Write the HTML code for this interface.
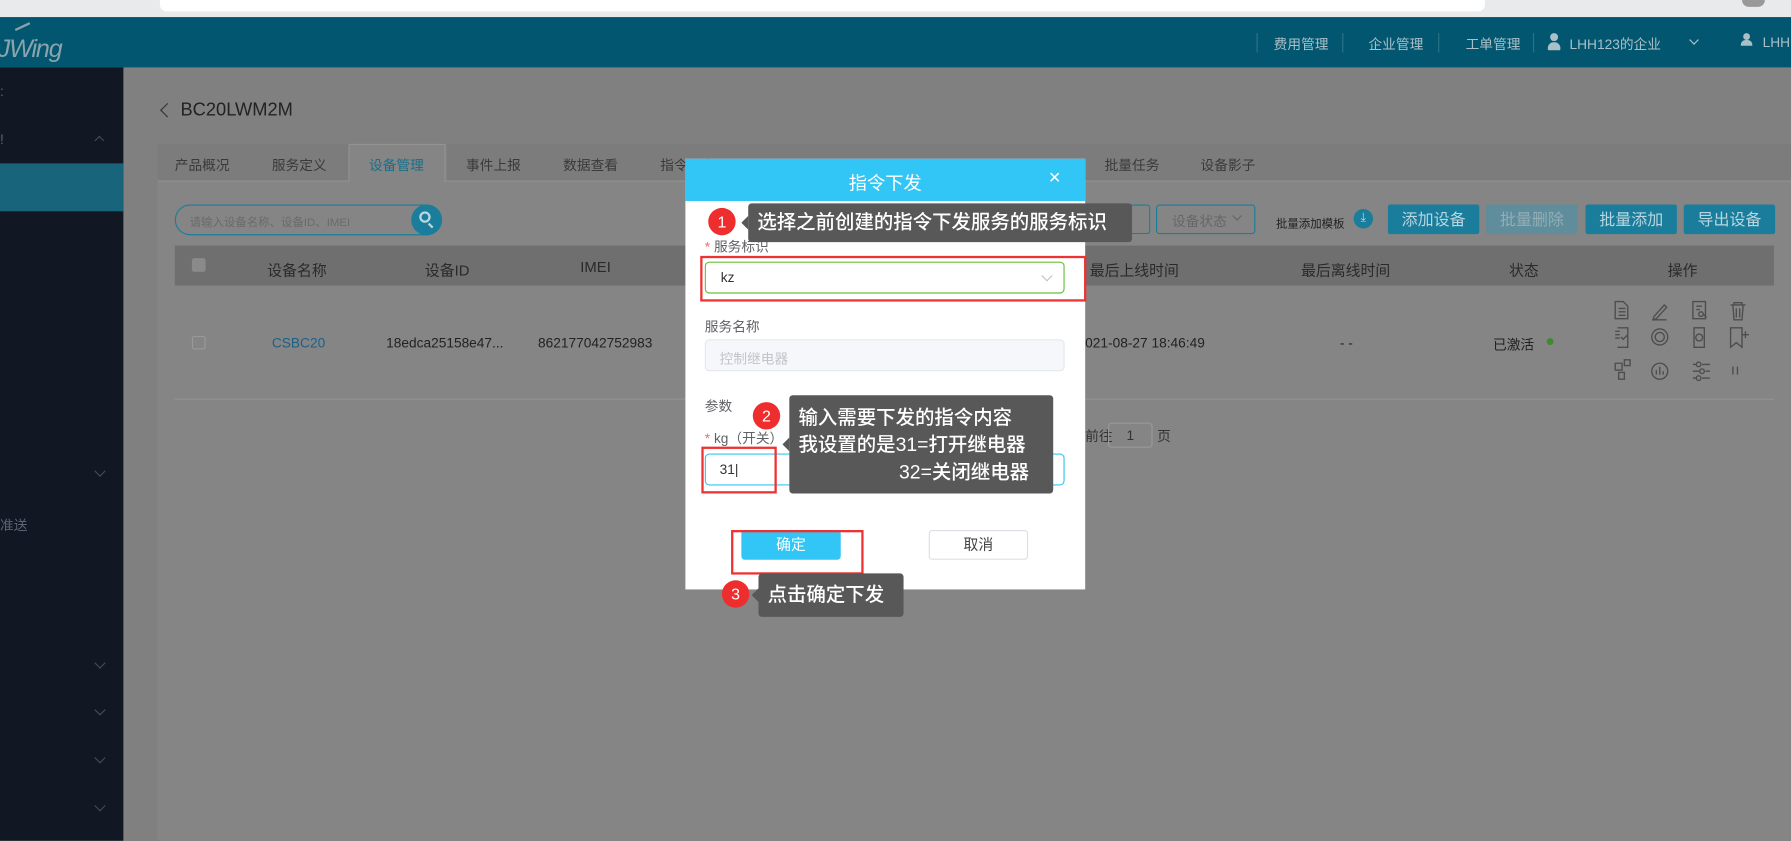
<!DOCTYPE html>
<html><head><meta charset="utf-8"><style>
*{margin:0;padding:0;box-sizing:border-box}
body{width:1791px;height:840px;overflow:hidden;background:#808080;font-family:"Liberation Sans","Noto Sans CJK SC",sans-serif}
#w{position:absolute;left:0;top:0;width:1568px;height:736px;transform:scale(1.1423);transform-origin:0 0;background:#808080}
.a{position:absolute}
.t{position:absolute;white-space:nowrap}
.tab{position:absolute;top:136px;font-size:12px;color:#3a3a3a}
.th{position:absolute;top:226px;font-size:13px;color:#2a2a2a}
.btn{position:absolute;top:179px;height:26px;width:80px;background:#1b7d9c;color:#b8d6e0;font-size:14px;text-align:center;line-height:26px;border-radius:2px}
.chev{position:absolute;width:7px;height:7px;border-right:1px solid #444b58;border-bottom:1px solid #444b58;transform:rotate(45deg)}
.side{position:absolute;left:0;font-size:12px;color:#5b6473}
.lbl{position:absolute;left:617px;font-size:12px;color:#606266}
.inp{position:absolute;left:617px;width:315px;height:28px;border-radius:4px}
.red{position:absolute;border:2px solid #ee3131}
.tip{position:absolute;background:#585858;color:#fff;font-size:17px;border-radius:3px;white-space:nowrap;font-weight:500}
.tip:before{content:"";position:absolute;left:-6px;top:50%;margin-top:-6px;border-style:solid;border-width:6px 6px 6px 0;border-color:transparent #585858 transparent transparent}
.bad{position:absolute;width:24px;height:24px;border-radius:50%;background:#ee2e2e;color:#fff;font-size:14px;text-align:center;line-height:24px}
</style></head><body><div id="w">
<div class="a" style="left:0;top:0;width:1568px;height:15px;background:#e9eaec"></div>
<div class="a" style="left:140px;top:0;width:1160px;height:10px;background:#fff;border-radius:0 0 6px 6px"></div>
<div class="a" style="left:1525px;top:0;width:20px;height:6px;background:#999;border-radius:0 0 10px 10px"></div>
<div class="a" style="left:0;top:15px;width:1568px;height:44px;background:#02566f"></div>
<div class="t" style="left:-2px;top:30px;font-size:22px;font-style:italic;color:#8aa4ad;letter-spacing:-1px">JWing</div>
<div class="a" style="left:14px;top:22px;width:14px;height:8px;border-top:2px solid #8aa4ad;transform:rotate(-25deg)"></div>
<div class="a" style="left:1100px;top:29px;width:1px;height:17px;background:#2d7288"></div>
<div class="a" style="left:1175px;top:29px;width:1px;height:17px;background:#2d7288"></div>
<div class="a" style="left:1259px;top:29px;width:1px;height:17px;background:#2d7288"></div>
<div class="a" style="left:1342px;top:29px;width:1px;height:17px;background:#2d7288"></div>
<div class="t" style="left:1115px;top:30px;font-size:12px;color:#a9c0c8">费用管理</div>
<div class="t" style="left:1198px;top:30px;font-size:12px;color:#a9c0c8">企业管理</div>
<div class="t" style="left:1283px;top:30px;font-size:12px;color:#a9c0c8">工单管理</div>
<div class="a" style="left:1357px;top:29px;width:7px;height:7px;border-radius:50%;background:#a9c0c8"></div>
<div class="a" style="left:1355px;top:37px;width:11px;height:7px;border-radius:5px 5px 1px 1px;background:#a9c0c8"></div>
<div class="t" style="left:1374px;top:30px;font-size:12px;color:#a9c0c8">LHH123的企业</div>
<div class="a" style="left:1480px;top:32px;width:6px;height:6px;border-right:1px solid #a9c0c8;border-bottom:1px solid #a9c0c8;transform:rotate(45deg)"></div>
<div class="a" style="left:1526px;top:29px;width:6px;height:6px;border-radius:50%;background:#a9c0c8"></div>
<div class="a" style="left:1524px;top:35px;width:10px;height:5px;border-radius:4px 4px 0 0;background:#a9c0c8"></div>
<div class="t" style="left:1543px;top:30px;font-size:12px;color:#a9c0c8">LHH</div>
<div class="a" style="left:0;top:59px;width:108px;height:677px;background:#111723"></div>
<div class="a" style="left:0;top:143px;width:108px;height:42px;background:#17647b"></div>
<div class="side" style="top:73px">:</div>
<div class="side" style="top:115px">!</div>
<div class="a" style="left:84px;top:120px;width:6px;height:6px;border-left:1px solid #444b58;border-top:1px solid #444b58;transform:rotate(45deg)"></div>
<div class="chev" style="left:84px;top:409px"></div>
<div class="side" style="top:451px">准送</div>
<div class="chev" style="left:84px;top:577px"></div>
<div class="chev" style="left:84px;top:618px"></div>
<div class="chev" style="left:84px;top:660px"></div>
<div class="chev" style="left:84px;top:702px"></div>
<div class="a" style="left:142px;top:92px;width:9px;height:9px;border-left:1px solid #333;border-bottom:1px solid #333;transform:rotate(45deg)"></div>
<div class="t" style="left:158px;top:88px;font-size:16px;color:#222">BC20LWM2M</div>
<div class="a" style="left:138px;top:126px;width:1430px;height:610px;background:#858585"></div>
<div class="a" style="left:138px;top:158px;width:1430px;height:1px;background:#929292"></div>
<div class="a" style="left:305px;top:126px;width:85px;height:33px;background:#858585;border:1px solid #929292;border-bottom:none"></div>
<div class="a" style="left:138px;top:126px;width:167px;height:32px;background:#7c7c7c"></div>
<div class="a" style="left:391px;top:126px;width:1177px;height:32px;background:#7c7c7c"></div>
<div class="tab" style="left:153px">产品概况</div>
<div class="tab" style="left:238px">服务定义</div>
<div class="tab" style="left:323px;color:#1a6e89">设备管理</div>
<div class="tab" style="left:408px">事件上报</div>
<div class="tab" style="left:493px">数据查看</div>
<div class="tab" style="left:578px">指令下发</div>
<div class="tab" style="left:967px">批量任务</div>
<div class="tab" style="left:1051px">设备影子</div>
<div class="a" style="left:153px;top:179px;width:234px;height:27px;border:1px solid #1a7d9c;border-radius:14px"></div>
<div class="t" style="left:166px;top:186px;font-size:10px;color:#6a6a6a">请输入设备名称、设备ID、IMEI</div>
<div class="a" style="left:360px;top:179px;width:27px;height:27px;border-radius:50%;background:#1a7d9c"></div>
<div class="a" style="left:367px;top:185px;width:10px;height:10px;border:2px solid #b8d6e0;border-radius:50%"></div>
<div class="a" style="left:376px;top:195px;width:2px;height:5px;background:#b8d6e0;transform:rotate(-45deg)"></div>
<div class="a" style="left:990px;top:179px;width:17px;height:26px;border:1px solid #1a7d9c;border-left:none;border-radius:0 3px 3px 0"></div>
<div class="a" style="left:1012px;top:179px;width:87px;height:26px;border:1px solid #1a7d9c;border-radius:3px"></div>
<div class="t" style="left:1026px;top:185px;font-size:12px;color:#666">设备状态</div>
<div class="a" style="left:1080px;top:186px;width:6px;height:6px;border-right:1px solid #666;border-bottom:1px solid #666;transform:rotate(45deg)"></div>
<div class="t" style="left:1117px;top:187px;font-size:10px;color:#222">批量添加模板</div>
<div class="a" style="left:1185px;top:183px;width:17px;height:17px;border-radius:50%;background:#1a7d9c;color:#b8d6e0;font-size:11px;text-align:center;line-height:16px">⤓</div>
<div class="btn" style="left:1215px">添加设备</div>
<div class="btn" style="left:1301px;background:#5f8d9b;color:#93aeb6">批量删除</div>
<div class="btn" style="left:1388px">批量添加</div>
<div class="btn" style="left:1474px">导出设备</div>
<div class="a" style="left:153px;top:215px;width:1400px;height:35px;background:#6f6f6f"></div>
<div class="a" style="left:168px;top:226px;width:12px;height:12px;background:#8a8a8a;border-radius:2px"></div>
<div class="th" style="left:234px">设备名称</div>
<div class="th" style="left:372px">设备ID</div>
<div class="th" style="left:508px">IMEI</div>
<div class="th" style="left:954px">最后上线时间</div>
<div class="th" style="left:1139px">最后离线时间</div>
<div class="th" style="left:1321px">状态</div>
<div class="th" style="left:1460px">操作</div>
<div class="a" style="left:168px;top:294px;width:12px;height:12px;border:1px solid #999;border-radius:2px"></div>
<div class="t" style="left:238px;top:293px;font-size:12px;color:#1d5f86">CSBC20</div>
<div class="t" style="left:338px;top:293px;font-size:12px;color:#222">18edca25158e47...</div>
<div class="t" style="left:471px;top:293px;font-size:12px;color:#222">862177042752983</div>
<div class="t" style="left:950px;top:293px;font-size:12px;color:#222">021-08-27 18:46:49</div>
<div class="t" style="left:1173px;top:293px;font-size:12px;color:#222">- -</div>
<div class="t" style="left:1307px;top:293px;font-size:12px;color:#222">已激活</div>
<div class="a" style="left:1354px;top:296px;width:6px;height:6px;border-radius:50%;background:#3f8a2f"></div>
<svg class="a" style="left:1410px;top:262px" width="124" height="76" fill="none" stroke="#4d4d4d" stroke-width="1.2">
<path d="M4 2h7l4 4v11H4z M7 8h6 M7 11h6 M7 14h6"/>
<path d="M38 15l9-10 2 2-9 10-3 1z M37 18h12"/>
<path d="M72 2h11v15H72z M75 6h5 M75 9h3 M79 11a2 2 0 1 0 .1 0 M81 13l3 3"/>
<path d="M105 5h13 M108 5v-2h7v2 M107 5l1 13h7l1-13 M110 8v8 M113 8v8"/>
<path d="M4 28h4 M4 31h4 M4 34h4 M6 25h9v17H6 M9 33l2 2 4-4"/>
<circle cx="43" cy="33" r="7"/><circle cx="43" cy="33" r="4"/>
<path d="M73 25h9v17h-9z"/><circle cx="77.5" cy="33.5" r="3"/>
<path d="M105 25h10v17l-5-4-5 4z M118 28v6 M115 31h6"/>
<path d="M4 56h6v6H4z M12 53h5v5h-5z M7 64h5v6H7z"/>
<circle cx="43" cy="63" r="7"/><path d="M40 66v-4 M43 66v-7 M46 66v-3"/>
<path d="M72 57h3 M80 57h7 M72 63h6 M83 63h4 M72 69h3 M80 69h7"/><circle cx="77" cy="57" r="2"/><circle cx="80" cy="63" r="2"/><circle cx="77" cy="69" r="2"/>
<path d="M107 59v7 M111 59v7"/>
</svg>
<div class="a" style="left:153px;top:349px;width:1400px;height:1px;background:#929292"></div>
<div class="t" style="left:950px;top:373px;font-size:12px;color:#333">前往</div>
<div class="a" style="left:970px;top:370px;width:39px;height:22px;border:1px solid #999;border-radius:3px;font-size:12px;color:#333;text-align:center;line-height:20px">1</div>
<div class="t" style="left:1013px;top:373px;font-size:12px;color:#333">页</div>
<div class="a" style="left:600px;top:139px;width:350px;height:377px;background:#fff"></div>
<div class="a" style="left:600px;top:139px;width:350px;height:37px;background:#31c6f5"></div>
<div class="t" style="left:600px;top:147px;width:350px;text-align:center;font-size:16px;color:#fff">指令下发</div>
<div class="t" style="left:918px;top:145px;font-size:18px;color:#fff">×</div>
<div class="lbl" style="top:207px"><span style="color:#f56c6c">*</span> 服务标识</div>
<div class="inp" style="top:229px;border:1px solid #67c23a"></div>
<div class="t" style="left:631px;top:236px;font-size:12px;color:#333">kz</div>
<div class="a" style="left:913px;top:238px;width:7px;height:7px;border-right:1px solid #c0c4cc;border-bottom:1px solid #c0c4cc;transform:rotate(45deg)"></div>
<div class="lbl" style="top:277px">服务名称</div>
<div class="inp" style="top:297px;background:#f5f7fa;border:1px solid #e4e7ed"></div>
<div class="t" style="left:630px;top:305px;font-size:12px;color:#c0c4cc">控制继电器</div>
<div class="lbl" style="top:347px">参数</div>
<div class="lbl" style="top:375px"><span style="color:#f56c6c">*</span> kg（开关）</div>
<div class="inp" style="top:397px;border:1px solid #31c6f5"></div>
<div class="t" style="left:630px;top:404px;font-size:12px;color:#333">31<span style="font-weight:100">|</span></div>
<div class="a" style="left:649px;top:464px;width:87px;height:26px;background:#31c6f5;border-radius:3px;color:#fff;font-size:13px;text-align:center;line-height:26px">确定</div>
<div class="a" style="left:813px;top:464px;width:87px;height:26px;border:1px solid #dcdfe6;border-radius:3px;color:#444;font-size:13px;text-align:center;line-height:24px">取消</div>
<div class="red" style="left:613px;top:224px;width:338px;height:40px"></div>
<div class="red" style="left:614px;top:391px;width:66px;height:41px"></div>
<div class="red" style="left:640px;top:464px;width:116px;height:39px"></div>
<div class="tip" style="left:655px;top:178px;width:336px;height:34px;padding:4px 8px;line-height:26px">选择之前创建的指令下发服务的服务标识</div>
<div class="bad" style="left:620px;top:182px">1</div>
<div class="tip" style="left:691px;top:346px;width:231px;height:86px;padding:8px 8px;line-height:24px">输入需要下发的指令内容<br>我设置的是31=打开继电器<br><span style="padding-left:88px">32=关闭继电器</span></div>
<div class="bad" style="left:659px;top:352px">2</div>
<div class="tip" style="left:664px;top:502px;width:127px;height:38px;padding:6px 8px;line-height:26px">点击确定下发</div>
<div class="bad" style="left:632px;top:508px">3</div>
</div></body></html>
